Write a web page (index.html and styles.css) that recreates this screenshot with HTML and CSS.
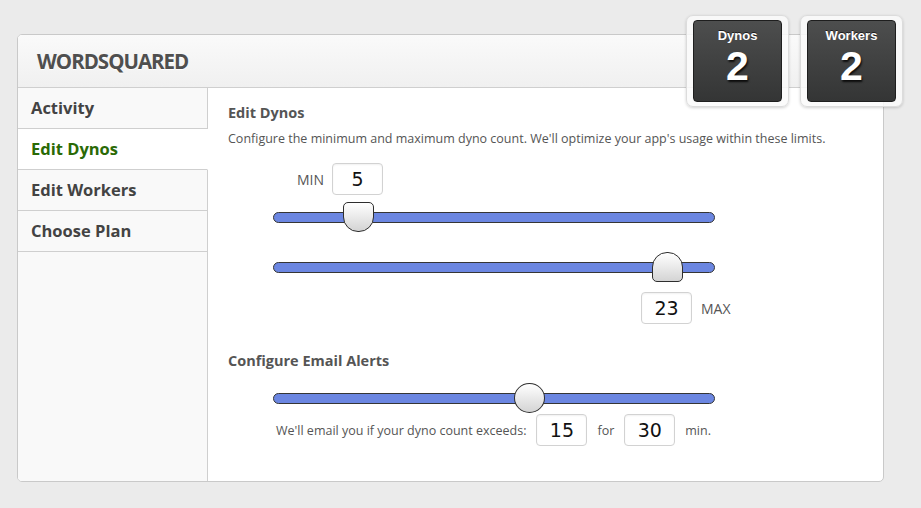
FILE: index.html
```html
<!DOCTYPE html>
<html>
<head>
<meta charset="utf-8">
<link rel="stylesheet" href="styles.css">
</head>
<body>
<div class="page">
  <div class="panel">
    <div class="header"><h1 class="title">WORDSQUARED</h1></div>
    <div class="main">
      <nav class="sidebar">
        <a class="nav-item">Activity</a>
        <a class="nav-item active">Edit Dynos</a>
        <a class="nav-item">Edit Workers</a>
        <a class="nav-item">Choose Plan</a>
        <div class="nav-fill"></div>
      </nav>
      <section class="content">
        <h2 class="section-title">Edit Dynos</h2>
        <p class="desc">Configure the minimum and maximum dyno count. We'll optimize your app's usage within these limits.</p>
        <div class="min-row">
          <span class="lbl">MIN</span>
          <span class="num-box">5</span>
        </div>
        <div class="slider slider-min">
          <div class="track"></div>
          <div class="handle handle-down" style="left:70px"></div>
        </div>
        <div class="slider slider-max">
          <div class="track"></div>
          <div class="handle handle-up" style="left:379px"></div>
        </div>
        <div class="max-row">
          <span class="num-box">23</span>
          <span class="lbl">MAX</span>
        </div>
        <h2 class="section-title alerts-title">Configure Email Alerts</h2>
        <div class="slider slider-alert">
          <div class="track"></div>
          <div class="handle handle-round" style="left:241px"></div>
        </div>
        <div class="alert-row">
          <span class="alert-text">We'll email you if your dyno count exceeds:</span>
          <span class="num-box">15</span>
          <span class="alert-text">for</span>
          <span class="num-box">30</span>
          <span class="alert-text">min.</span>
        </div>
      </section>
    </div>
  </div>
  <div class="counters">
    <div class="counter">
      <div class="counter-inner">
        <div class="counter-label">Dynos</div>
        <div class="counter-value">2</div>
      </div>
    </div>
    <div class="counter">
      <div class="counter-inner">
        <div class="counter-label">Workers</div>
        <div class="counter-value">2</div>
      </div>
    </div>
  </div>
</div>
</body>
</html>
```

FILE: styles.css
```css
html, body {
  margin: 0;
  padding: 0;
}
body {
  background: #ebebeb;
  font-family: "Open Sans", "DejaVu Sans", sans-serif;
  width: 921px;
  height: 508px;
  overflow: hidden;
}
.page {
  position: relative;
  padding: 34px 0 0 17px;
}
.panel {
  box-sizing: border-box;
  width: 867px;
  height: 448px;
  border: 1px solid #c9c9c9;
  border-radius: 5px;
  background: #fff;
  overflow: hidden;
  display: flex;
  flex-direction: column;
}
.header {
  box-sizing: border-box;
  height: 53px;
  border-bottom: 1px solid #cfcfcf;
  background: linear-gradient(#fafafa, #f0f0f0);
  display: flex;
  align-items: center;
  padding-left: 19px;
}
.title {
  margin: 0;
  font-size: 20.5px;
  font-weight: 700;
  color: #4f4f4f;
  letter-spacing: -1px;
  text-shadow: 0 1px 0 #fff;
}
.main {
  flex: 1;
  display: flex;
}
.sidebar {
  width: 190px;
  display: flex;
  flex-direction: column;
  background: #f9f9f9;
}
.nav-item {
  box-sizing: border-box;
  height: 41px;
  border-bottom: 1px solid #cfcfcf;
  border-right: 1px solid #cfcfcf;
  padding: 0 0 1px 13px;
  display: flex;
  align-items: center;
  font-size: 16.5px;
  font-weight: 700;
  color: #434343;
}
.nav-item.active {
  background: #fff;
  border-right-color: #fff;
  color: #2a6a06;
}
.nav-fill {
  flex: 1;
  border-right: 1px solid #cfcfcf;
}
.content {
  flex: 1;
  padding: 16px 0 0 20px;
}
.section-title {
  margin: 0;
  font-size: 14.5px;
  line-height: 18px;
  font-weight: 700;
  color: #555;
}
.desc {
  margin: 9px 0 0;
  font-size: 12.5px;
  line-height: 16px;
  color: #555;
}
.num-box {
  box-sizing: border-box;
  display: inline-block;
  width: 51px;
  height: 32px;
  border: 1px solid #d2d2d2;
  border-radius: 4px;
  background: #fff;
  box-shadow: inset 0 1px 2px rgba(0,0,0,0.06);
  font-family: "DejaVu Sans", sans-serif;
  font-size: 19px;
  line-height: 30px;
  text-align: center;
  color: #111;
}
.lbl {
  font-size: 14px;
  color: #555;
}
.min-row {
  margin: 16px 0 0 69px;
  display: flex;
  align-items: center;
  gap: 8px;
}
.max-row {
  margin: 10px 0 0 413px;
  display: flex;
  align-items: center;
  gap: 9px;
}
.slider {
  position: relative;
  box-sizing: border-box;
  width: 442px;
  height: 30px;
  margin-left: 45px;
  padding-top: 10px;
}
.slider-min { margin-top: 7px; }
.slider-max { margin-top: 20px; }
.slider-alert { margin-top: 13px; }
.track {
  box-sizing: border-box;
  height: 11px;
  border: 1px solid #353535;
  border-radius: 6px;
  background: #6b86e1;
}
.handle {
  position: absolute;
  top: 0;
  box-sizing: border-box;
  width: 31px;
  height: 30px;
  border: 1px solid #2e2e2e;
  background: linear-gradient(#ffffff, #d4d4d4);
}
.handle-down {
  border-radius: 5px 5px 15px 15px;
}
.handle-up {
  border-radius: 15px 15px 5px 5px;
}
.handle-round {
  border-radius: 50%;
}
.alerts-title {
  margin-top: 28px;
}
.alert-row {
  margin: 1px 0 0 48px;
  display: flex;
  align-items: center;
  gap: 10px;
}
.alert-text {
  font-size: 12.5px;
  color: #555;
}
.counters {
  position: absolute;
  left: 686px;
  top: 15px;
  display: flex;
  gap: 11px;
}
.counter {
  box-sizing: border-box;
  width: 103px;
  height: 92px;
  padding: 4px 6px 0 6px;
  border-radius: 7px;
  background: rgba(250,250,250,0.85);
  border: 1px solid #dcdcdc;
  box-shadow: 0 1px 3px rgba(0,0,0,0.18);
}
.counter-inner {
  box-sizing: border-box;
  height: 82px;
  border: 1px solid #1e1e1e;
  border-radius: 4px;
  background: linear-gradient(#4d4e4e, #343535);
  display: flex;
  flex-direction: column;
  align-items: center;
  font-family: "Liberation Sans", Arial, sans-serif;
  color: #fff;
}
.counter-label {
  margin-top: 7px;
  font-size: 13px;
  font-weight: 700;
  line-height: 15px;
  text-shadow: 0 -1px 0 rgba(0,0,0,0.6);
}
.counter-value {
  margin-top: 1px;
  font-size: 41px;
  font-weight: 700;
  line-height: 45px;
  text-shadow: 1px 2px 2px rgba(0,0,0,0.8);
}
```
